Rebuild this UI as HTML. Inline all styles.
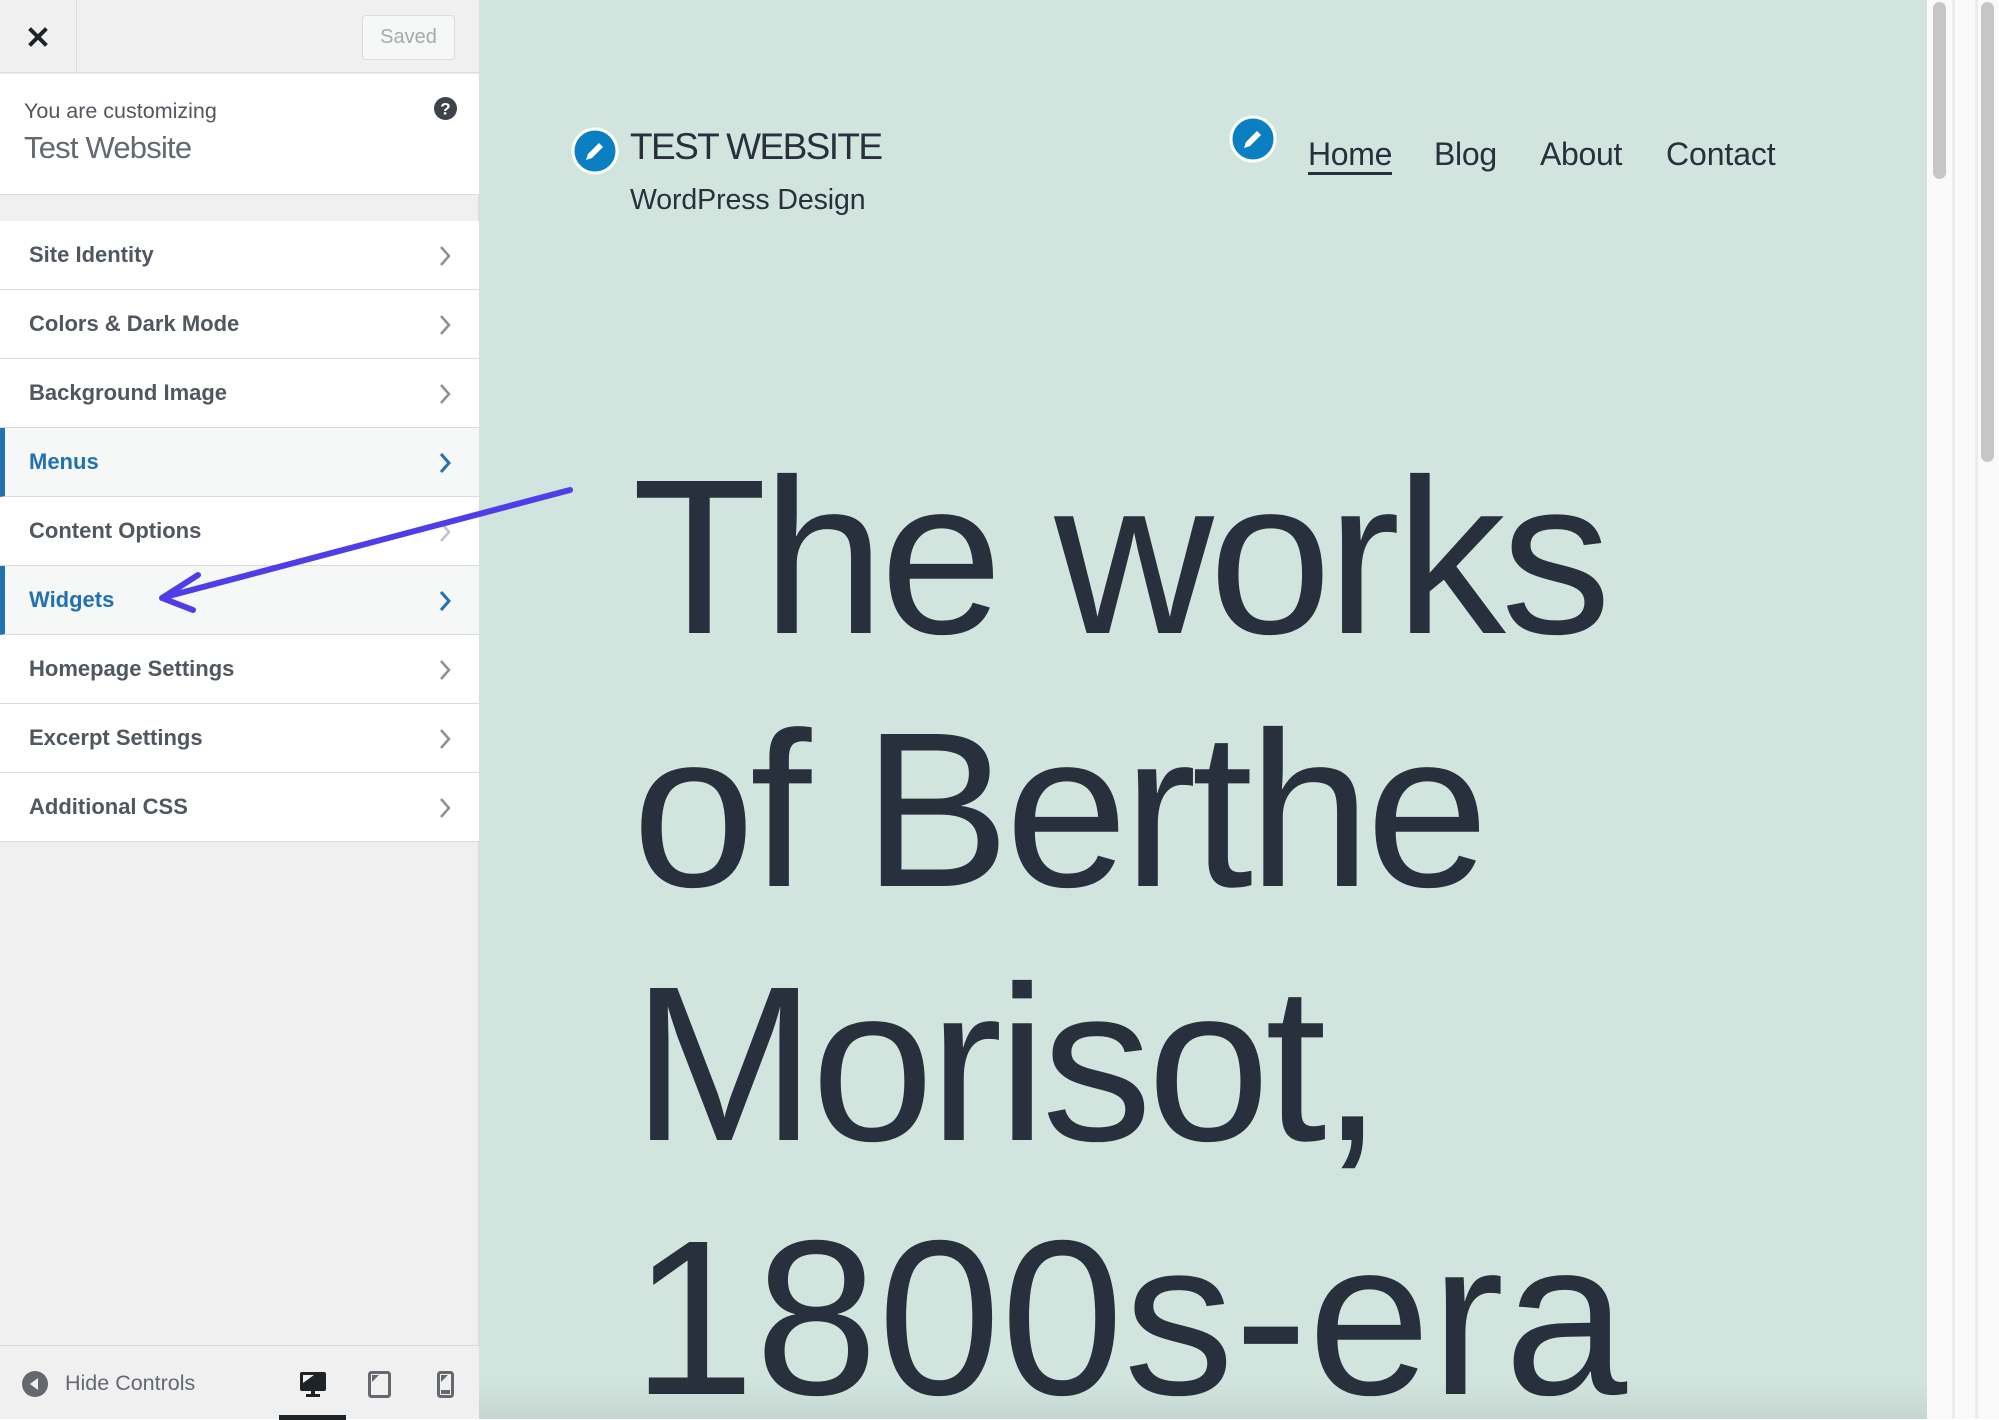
<!DOCTYPE html>
<html><head><meta charset="utf-8">
<style>
*{margin:0;padding:0;box-sizing:border-box}
html,body{width:1999px;height:1419px;overflow:hidden;font-family:"Liberation Sans",sans-serif;background:#fff}
#side{position:absolute;left:0;top:0;width:479px;height:1419px;background:#f0f0f1;border-right:1px solid #dcdcde}
#top{position:absolute;left:0;top:0;width:479px;height:73px;background:#f0f0f1;border-bottom:1px solid #dcdcde}
#close{position:absolute;left:0;top:0;width:77px;height:73px;border-right:1px solid #dcdcde}
#saved{position:absolute;left:362px;top:15px;width:93px;height:45px;border:1px solid #dcdcde;border-radius:4px;background:#f6f7f7;color:#a7aaad;font-size:20px;line-height:43px;text-align:center}
#info{position:absolute;left:0;top:74px;width:479px;height:121px;background:#fff;border-bottom:1px solid #dcdcde}
#info .a{position:absolute;left:24px;top:25px;font-size:21.5px;color:#50575e}
#info .b{position:absolute;left:24px;top:56px;font-size:31px;color:#646970;letter-spacing:-0.8px}
.row{position:absolute;left:0;width:479px;height:69px;background:#fff;border-bottom:1px solid #dcdcde;font-size:22px;font-weight:bold;color:#50575e;line-height:68px;padding-left:29px}
.row.hl{background:#f6f7f7;color:#2271b1;border-left:5px solid #2271b1;padding-left:24px}
.row svg{position:absolute;left:438px;top:24px}
#foot{position:absolute;left:0;top:1345px;width:479px;height:74px;border-top:1px solid #dcdcde;background:#f0f0f1}
#prev{position:absolute;left:479px;top:0;width:1448px;height:1419px;background:#d1e4dd;overflow:hidden}
#prev .shade{position:absolute;left:0;bottom:0;width:100%;height:40px;background:linear-gradient(rgba(0,0,0,0),rgba(0,0,0,0.06))}
.t{position:absolute;color:#28303d;white-space:nowrap}
.big{left:153px;font-size:221px;letter-spacing:-5px;line-height:1}
#sb{position:absolute;left:1927px;top:0;width:72px;height:1419px;background:#fafafa}
</style></head><body>
<div id="side">
 <div id="top">
  <div id="close"><svg width="77" height="73" viewBox="0 0 77 73"><path d="M31 30 L45 44 M45 30 L31 44" stroke="#1d2327" stroke-width="4" stroke-linecap="square"/></svg></div>
  <div id="saved">Saved</div>
 </div>
 <div id="info">
  <div class="a">You are customizing</div>
  <div class="b">Test Website</div>
  <svg style="position:absolute;left:434px;top:23px" width="23" height="23" viewBox="0 0 23 23"><circle cx="11.5" cy="11.5" r="11.5" fill="#3c434a"/><text x="11.5" y="17.5" text-anchor="middle" font-family="Liberation Sans" font-weight="bold" font-size="17" fill="#fff">?</text></svg>
 </div>
 <div class="row" style="top:221px">Site Identity<svg width="14" height="22" viewBox="0 0 14 22"><path d="M3 2 L11 11 L3 20" fill="none" stroke="#8c8f94" stroke-width="2.5"/></svg></div>
 <div class="row" style="top:290px">Colors &amp; Dark Mode<svg width="14" height="22" viewBox="0 0 14 22"><path d="M3 2 L11 11 L3 20" fill="none" stroke="#8c8f94" stroke-width="2.5"/></svg></div>
 <div class="row" style="top:359px">Background Image<svg width="14" height="22" viewBox="0 0 14 22"><path d="M3 2 L11 11 L3 20" fill="none" stroke="#8c8f94" stroke-width="2.5"/></svg></div>
 <div class="row hl" style="top:428px">Menus<svg style="left:433px" width="14" height="22" viewBox="0 0 14 22"><path d="M3 2 L11 11 L3 20" fill="none" stroke="#2271b1" stroke-width="3"/></svg></div>
 <div class="row" style="top:497px">Content Options<svg width="14" height="22" viewBox="0 0 14 22"><path d="M3 2 L11 11 L3 20" fill="none" stroke="#c3c4c7" stroke-width="2.5"/></svg></div>
 <div class="row hl" style="top:566px">Widgets<svg style="left:433px" width="14" height="22" viewBox="0 0 14 22"><path d="M3 2 L11 11 L3 20" fill="none" stroke="#2271b1" stroke-width="3"/></svg></div>
 <div class="row" style="top:635px">Homepage Settings<svg width="14" height="22" viewBox="0 0 14 22"><path d="M3 2 L11 11 L3 20" fill="none" stroke="#8c8f94" stroke-width="2.5"/></svg></div>
 <div class="row" style="top:704px">Excerpt Settings<svg width="14" height="22" viewBox="0 0 14 22"><path d="M3 2 L11 11 L3 20" fill="none" stroke="#8c8f94" stroke-width="2.5"/></svg></div>
 <div class="row" style="top:773px">Additional CSS<svg width="14" height="22" viewBox="0 0 14 22"><path d="M3 2 L11 11 L3 20" fill="none" stroke="#8c8f94" stroke-width="2.5"/></svg></div>
 <div id="foot">
  <svg style="position:absolute;left:22px;top:25px" width="26" height="26" viewBox="0 0 26 26"><circle cx="13" cy="13" r="13" fill="#646970"/><path d="M16 7 L8 13 L16 19 Z" fill="#f0f0f1"/></svg>
  <div style="position:absolute;left:65px;top:25px;font-size:21.5px;color:#646970">Hide Controls</div>
  <svg style="position:absolute;left:299px;top:25px" width="28" height="27" viewBox="0 0 28 27"><rect x="1" y="1" width="26" height="19" rx="2" fill="#1d2327"/><path d="M4 4 H15 L4 12 Z" fill="#f0f0f1"/><rect x="12" y="20" width="4" height="4" fill="#1d2327"/><rect x="7" y="23" width="14" height="3" fill="#1d2327"/></svg>
  <svg style="position:absolute;left:368px;top:25px" width="23" height="27" viewBox="0 0 23 27"><rect x="1.5" y="1.5" width="20" height="24" rx="2" fill="none" stroke="#646970" stroke-width="3"/><path d="M4 4 H11 L4 11 Z" fill="#646970"/></svg>
  <svg style="position:absolute;left:437px;top:25px" width="17" height="27" viewBox="0 0 17 27"><rect x="1.5" y="1.5" width="14" height="24" rx="2" fill="none" stroke="#646970" stroke-width="3"/><path d="M4 4 H11 L4 11 Z" fill="#646970"/><rect x="4" y="19" width="9" height="4" fill="#646970"/></svg>
  <div style="position:absolute;left:279px;top:69px;width:67px;height:5px;background:#1d2327"></div>
 </div>
</div>
<div id="prev">
 <svg style="position:absolute;left:92px;top:127px" width="48" height="48" viewBox="0 0 48 48"><circle cx="24" cy="24" r="22" fill="#0a7fc2" stroke="#fff" stroke-width="3"/><path d="M16 32 L17 27 L28 16 L32 20 L21 31 Z" fill="#fff"/><path d="M15 33 L17 27 L21 31 Z" fill="#fff"/></svg>
 <svg style="position:absolute;left:750px;top:115px" width="48" height="48" viewBox="0 0 48 48"><circle cx="24" cy="24" r="22" fill="#0a7fc2" stroke="#fff" stroke-width="3"/><path d="M16 32 L17 27 L28 16 L32 20 L21 31 Z" fill="#fff"/><path d="M15 33 L17 27 L21 31 Z" fill="#fff"/></svg>
 <div class="t" style="left:151px;top:126px;font-size:37px;letter-spacing:-1.6px">TEST WEBSITE</div>
 <div class="t" style="left:151px;top:184px;font-size:28.5px;letter-spacing:-0.1px">WordPress Design</div>
 <div class="t" style="left:829px;top:136px;font-size:32px;letter-spacing:-0.3px;border-bottom:3px solid #28303d;line-height:36px">Home</div>
 <div class="t" style="left:955px;top:136px;font-size:32px;letter-spacing:-0.3px;line-height:36px">Blog</div>
 <div class="t" style="left:1061px;top:136px;font-size:32px;letter-spacing:-0.3px;line-height:36px">About</div>
 <div class="t" style="left:1187px;top:136px;font-size:32px;letter-spacing:-0.1px;line-height:36px">Contact</div>
 <div class="t big" style="top:446px">The works</div>
 <div class="t big" style="top:699px">of Berthe</div>
 <div class="t big" style="top:953px">Morisot,</div>
 <div class="t big" style="top:1207px;letter-spacing:0">1800s-era</div>
 <div class="shade"></div>
</div>
<div id="sb">
 <div style="position:absolute;left:25px;top:0;width:3px;height:1419px;background:#ececec"></div>
 <div style="position:absolute;left:48px;top:0;width:3px;height:1419px;background:#ececec"></div>
 <div style="position:absolute;left:6px;top:2px;width:13px;height:177px;border-radius:7px;background:#c6c6c6"></div>
 <div style="position:absolute;left:54px;top:2px;width:13px;height:460px;border-radius:7px;background:#c6c6c6"></div>
</div>
<svg style="position:absolute;left:0;top:0" width="1999" height="1419"><path d="M570 490 L165 597" stroke="#4f3ee8" stroke-width="6" stroke-linecap="round" fill="none"/><path d="M198 575 L162 598 L193 610" stroke="#4f3ee8" stroke-width="6" stroke-linecap="round" stroke-linejoin="round" fill="none"/></svg>
</body></html>
